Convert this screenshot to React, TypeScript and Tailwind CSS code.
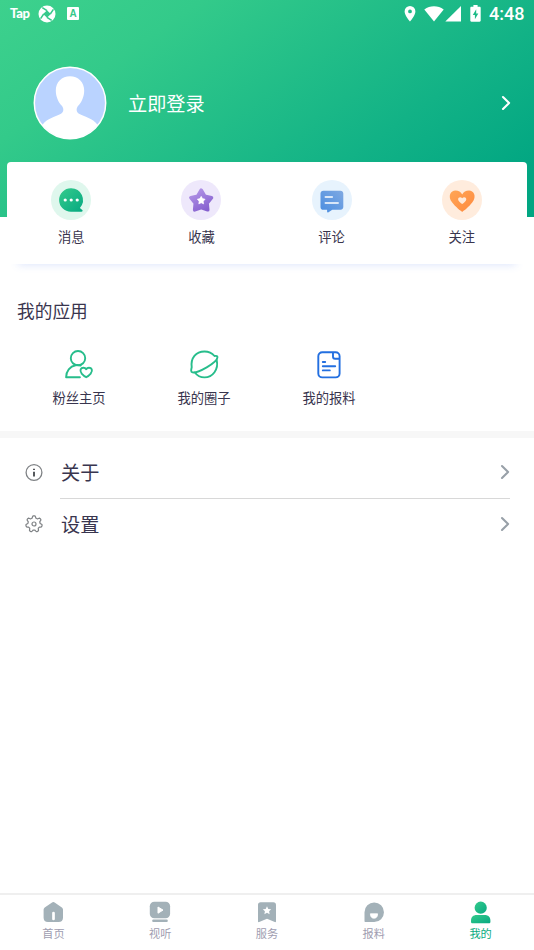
import type { ReactNode } from "react";

/* Shared gradients, referenced by id from the icons below */
function Gradients() {
  return (
    <svg width="0" height="0" className="absolute" aria-hidden="true">
      <defs>
        <linearGradient id="green" x1="0" y1="0" x2="1" y2="1">
          <stop offset="0" stopColor="#35cb8c" />
          <stop offset="1" stopColor="#06a981" />
        </linearGradient>
        <linearGradient id="purple" x1="0.2" y1="0" x2="0.8" y2="1">
          <stop offset="0" stopColor="#b193e6" />
          <stop offset="1" stopColor="#8660cf" />
        </linearGradient>
        <linearGradient id="blue" x1="1" y1="0" x2="0" y2="1">
          <stop offset="0" stopColor="#7fa9e2" />
          <stop offset="1" stopColor="#4a8de0" />
        </linearGradient>
        <linearGradient id="orange" x1="0" y1="0" x2="1" y2="1">
          <stop offset="0" stopColor="#ffa656" />
          <stop offset="1" stopColor="#ff8a3f" />
        </linearGradient>
      </defs>
    </svg>
  );
}

function StatusBar() {
  return (
    <div className="flex h-[27px] items-center pr-[9px] pl-[10px] text-white">
      <span className="w-[22px] pb-px font-['Lato'] text-[13px] leading-none font-black tracking-[-0.3px]">
        Tap
      </span>
      <svg width="18" height="18" viewBox="0 0 18 18" className="ml-[6px]">
        <circle cx="9" cy="9" r="8.5" fill="#fff" />
        <path d="M9 5.200 12.800 9 9 12.800 5.200 9Z" fill="#36c98b" />
        <path d="M9 5.700 4.300 2.600M12.300 9l3.100-4.700M9 12.300l4.700 3.100M5.700 9l-3.100 4.700" fill="none" stroke="#36c98b" strokeWidth="1.500" />
      </svg>
      <span className="ml-[11px] flex h-[13px] w-[12px] items-center justify-center rounded-[1px] bg-white font-['Liberation_Sans'] text-[10px] leading-none font-bold text-[#36c98b]">
        A
      </span>

      <div className="ml-auto flex items-center">
        <svg width="12" height="16" viewBox="0 0 12 16">
          <path d="M6 0A5.400 5.400 0 0 0 .6 5.400C.6 9.300 6 15.500 6 15.500S11.400 9.300 11.400 5.400A5.400 5.400 0 0 0 6 0Zm0 7.300a1.900 1.900 0 1 1 0-3.800 1.900 1.900 0 0 1 0 3.800Z" fill="#fff" />
        </svg>
        <svg width="20" height="16" viewBox="0 0 20 16" className="ml-[8px]">
          <path d="M.3 3.400C6-.9 14-.9 19.700 3.400L10 15.500Z" fill="#fff" />
        </svg>
        <svg width="16" height="16" viewBox="0 0 16 16" className="ml-[1px]">
          <path d="M16 0V15.500H.3Z" fill="#fff" />
        </svg>
        <svg width="11" height="17" viewBox="0 0 11 17" className="ml-[9px]">
          <path d="M3.400 0h4.200v1.800h2c.7 0 1.100.4 1.100 1.100v12.700c0 .7-.4 1.100-1.100 1.100H1.400c-.7 0-1.100-.4-1.100-1.100V2.900c0-.7.400-1.100 1.100-1.100h2Z" fill="#fff" />
          <path d="M6.200 4.200 2.800 10h2.100v4.200L8.300 8.500H6.200Z" fill="#1dbb87" />
        </svg>
        <span className="ml-[8px] w-[36px] font-['Roboto'] text-[18px] leading-none font-medium whitespace-nowrap">
          4:48
        </span>
      </div>
    </div>
  );
}

function Avatar() {
  return (
    <svg width="74" height="74" viewBox="0 0 74 74">
      <circle cx="37" cy="37" r="35.6" fill="#bad3ff" />
      <path d="M37 10.200c-8.200 0-14.200 5.800-14.200 14.200 0 6.200 2.600 11.600 5.800 15.200 2.400 2.900 2.400 6.200-.6 8.200-5 2.700-14.200 4.600-18.700 11.200C17.200 67.600 26.600 72.800 37 72.800S56.800 67.600 64.700 59c-4.500-6.600-13.700-8.500-18.700-11.200-3-2-3-5.300-.6-8.200 3.200-3.600 5.800-9 5.800-15.200C51.200 16 45.200 10.200 37 10.200Z" fill="#fff" />
      <circle cx="37" cy="37" r="35.700" fill="none" stroke="#fff" strokeWidth="1.500" />
    </svg>
  );
}

function Chevron({ color }: { color: string }) {
  return (
    <svg width="10" height="16" viewBox="0 0 10 16" fill="none" stroke={color} strokeWidth="2.100" strokeLinecap="round" strokeLinejoin="round">
      <path d="M2 2 8.100 8 2 14" />
    </svg>
  );
}

// Seven-toothed outline for the settings icon, sampled around the centre
const gearPath =
  Array.from({ length: 84 }, (_, i) => {
    const a = (i / 84) * Math.PI * 2;
    const r = 7.1 + 1.1 * Math.tanh(2.2 * Math.cos(7 * a));
    const x = 9 + r * Math.sin(a);
    const y = 9 - r * Math.cos(a);
    return `${i === 0 ? "M" : "L"}${x.toFixed(2)} ${y.toFixed(2)}`;
  }).join("") + "Z";

const shortcuts: { label: string; icon: ReactNode }[] = [
  {
    label: "消息",
    icon: (
      <>
        <circle cx="20" cy="20" r="20" fill="#dff7ed" />
        <path d="M19.900 8.200a11.800 11.800 0 0 0 0 23.600h10.400c1.500 0 1.700-1.500.7-2.100l-2.100-1.800A11.800 11.800 0 0 0 19.900 8.200Z" fill="url(#green)" />
        <g fill="#fff">
          <circle cx="14.200" cy="20" r="1.600" />
          <circle cx="20.200" cy="20" r="1.600" />
          <circle cx="26.200" cy="20" r="1.600" />
        </g>
      </>
    ),
  },
  {
    label: "收藏",
    icon: (
      <>
        <circle cx="20" cy="20" r="20" fill="#eee8fb" />
        <path d="m20.200 10.200 3.500 6 6.800 1.500-4.400 5.400.6 6.700-6.500-2.200-6.500 2.200.6-6.700-4.400-5.400 6.800-1.500Z" fill="url(#purple)" stroke="url(#purple)" strokeWidth="3.600" strokeLinejoin="round" />
        <path d="m20.200 16.300 1.300 2.300 2.600.6-1.800 2 .3 2.700-2.400-1.100-2.400 1.100.3-2.700-1.800-2 2.600-.6Z" fill="#fff" stroke="#fff" strokeWidth=".6" strokeLinejoin="round" />
      </>
    ),
  },
  {
    label: "评论",
    icon: (
      <>
        <circle cx="20" cy="20" r="20" fill="#e7f3fd" />
        <path d="M11.300 10.800h17.200c1.600 0 2.800 1.200 2.800 2.800v13.300c0 1.600-1.200 2.800-2.800 2.800h-8.200l-3.800 2.600c-.7.500-1.400.2-1.400-.6v-2h-3.800a2.800 2.800 0 0 1-2.800-2.800V13.600c0-1.600 1.200-2.800 2.800-2.800Z" fill="url(#blue)" />
        <path d="M13.300 17.100h7M13.300 22.900h12.900" stroke="#fff" strokeWidth="1.500" strokeLinecap="round" />
      </>
    ),
  },
  {
    label: "关注",
    icon: (
      <>
        <circle cx="20" cy="20" r="20" fill="#ffecdd" />
        <path d="M20.200 31.900c-1.600-.8-6.700-5-10-9.300C5.100 15.900 9 10.500 13.400 10.500c3.200 0 5.500 1.500 6.800 4 1.300-2.500 3.600-4 6.800-4 4.400 0 8.300 5.400 3.200 12.100-3.300 4.300-8.400 8.500-10 9.300Z" fill="url(#orange)" />
        <path d="M20.200 23.900c-1.300-.8-4.100-2.600-4.100-4.700 0-2.300 2.900-2.700 4.100-.9 1.200-1.800 4.100-1.400 4.100.9 0 2.100-2.800 3.900-4.100 4.700Z" fill="#fff" fillOpacity=".8" />
      </>
    ),
  },
];

const apps: { label: string; icon: ReactNode }[] = [
  {
    label: "粉丝主页",
    icon: (
      <g stroke="#27bd8b">
        <circle cx="15" cy="9.200" r="7.200" />
        <path d="M12.600 16.200C7 17.300 3.100 22 3.100 28.300H16.900M12.600 16.200c1.900-.4 3.600-.2 5 .3" />
        <path d="M23.200 28.200c-1.100-.5-3.100-2-4.500-3.600-2.600-3.300-.8-5.900 1.700-5.900 1.400 0 2.300.6 2.800 1.500.5-.9 1.400-1.500 2.800-1.500 2.500 0 4.300 2.600 1.700 5.900-1.400 1.600-3.400 3.100-4.500 3.600Z" />
      </g>
    ),
  },
  {
    label: "我的圈子",
    icon: (
      <g stroke="#27bd8b">
        <path d="M3.700 18.200C2.500 9 7.900 2.500 16.500 2.500c4.300 0 7.600 1.700 10 4.500 2.200-.4 3.200.2 2.900 1.700-.4 5-19.800 15.800-24.900 14.700-1.800-.4-1.500-2.400-.8-5.200Z" />
        <path d="M28.700 11.300C30.800 20.300 24.800 28.400 16.500 28.400c-3.800 0-7.300-1.700-9.600-4.900" />
      </g>
    ),
  },
  {
    label: "我的报料",
    icon: (
      <g stroke="#236fe0">
        <path d="M20 3.200H9.300a4 4 0 0 0-4 4v17.200a4 4 0 0 0 4 4h13.300a4 4 0 0 0 4-4V9.800M20 3.200v4.500c0 1.300.8 2.100 2.100 2.100h4.500M20 3.200h2.600a4 4 0 0 1 4 4v2.600" />
        <path d="M9.800 13h2.400M9.800 17.200h12.400M9.800 21.400h7" />
      </g>
    ),
  },
];

const rows: { label: string; icon: ReactNode }[] = [
  {
    label: "关于",
    icon: (
      <>
        <circle cx="9" cy="8.500" r="7.900" strokeWidth="1.300" />
        <path d="M9 7.700v4.700M9 4.800v1.200" strokeWidth="2" stroke="#55585c" />
      </>
    ),
  },
  {
    label: "设置",
    icon: (
      <g strokeWidth="1.200">
        <path d={gearPath} />
        <circle cx="9" cy="9" r="2" />
      </g>
    ),
  },
];

const tabs: { label: string; active?: boolean; icon: ReactNode }[] = [
  {
    label: "首页",
    icon: (
      <>
        <path d="M9.700 1.700c1.100-.8 2.200-.8 3.300 0l6.500 4.600c1 .7 1.500 1.500 1.500 2.700v7.700c0 2.800-1.600 4.400-4.400 4.400H6c-2.800 0-4.400-1.600-4.400-4.400V9c0-1.200.5-2 1.500-2.700Z" />
        <path d="M11.500 12v5.900" stroke="#fff" strokeWidth="2.700" strokeLinecap="round" />
      </>
    ),
  },
  {
    label: "视听",
    icon: (
      <>
        <rect x=".8" y=".7" width="20.300" height="16.600" rx="4.500" />
        <path d="M9 6v6.200l5-3.100Z" fill="#fff" stroke="#fff" strokeWidth="1" strokeLinejoin="round" />
        <rect x="3.200" y="18.600" width="15.600" height="2.400" rx="1.100" />
      </>
    ),
  },
  {
    label: "服务",
    icon: (
      <>
        <path d="M4.600 1.300h12.800c1.600 0 2.600 1 2.600 2.600v16.500c0 .7-.6 1-1.200.7L11 17.800l-7.800 3.300c-.6.3-1.200 0-1.200-.7V3.900c0-1.600 1-2.600 2.600-2.600Z" />
        <path d="m11 5.300 1.300 2.600 2.900.4-2.100 2 .5 2.900-2.600-1.400-2.600 1.400.5-2.900-2.100-2 2.900-.4Z" fill="#fff" />
      </>
    ),
  },
  {
    label: "报料",
    icon: (
      <>
        <path d="M11.200 1.500a9.700 9.700 0 1 1 0 19.500H2.600c-.8 0-1.100-.4-1.100-1.100v-8.700A9.700 9.700 0 0 1 11.200 1.500Z" />
        <path d="M7.400 12.800h7.200a3.600 4.400 0 0 1-7.200 0Z" fill="#fff" stroke="#fff" strokeWidth=".8" strokeLinejoin="round" />
      </>
    ),
  },
  {
    label: "我的",
    active: true,
    icon: (
      <>
        <circle cx="10.700" cy="6.700" r="6.100" />
        <path d="M6.700 14h8c3.600 0 5.700 2.100 5.700 5.700v1c0 1-.6 1.600-1.600 1.600H2.600c-1 0-1.600-.6-1.600-1.600v-1C1 16.100 3.100 14 6.700 14Z" />
      </>
    ),
  },
];

export default function App() {
  return (
    <div className="flex h-[950px] w-[534px] flex-col overflow-hidden bg-white font-['Noto_Sans_CJK_SC',sans-serif] text-[#39354e]">
      <Gradients />

      {/* Header */}
      <header className="h-[217px] shrink-0 bg-[linear-gradient(145deg,#3dd18d_0%,#33ca8a_24%,#12b286_68%,#01a682_92%)]">
        <StatusBar />
        <div className="mt-[39px] flex items-center pr-[23px] pl-[33px]">
          <Avatar />
          <span className="ml-[21px] pb-px text-[19.200px] leading-[28px] text-white">立即登录</span>
          <span className="ml-auto">
            <Chevron color="#fff" />
          </span>
        </div>
      </header>

      {/* Shortcut card */}
      <section className="relative z-10 mr-[7px] ml-[6.500px] -mt-[55px] grid h-[102px] shrink-0 grid-cols-4 rounded-[4px] bg-white pt-[18px] shadow-[0_12px_8px_-11px_rgba(90,130,240,0.2)]">
        {shortcuts.map(({ label, icon }) => (
          <div key={label} className="flex flex-col items-center pr-[0.500px]">
            <svg width="40" height="40" viewBox="0 0 40 40">{icon}</svg>
            <span className="mt-[7px] text-[13.300px] leading-[20px]">{label}</span>
          </div>
        ))}
      </section>

      {/* Apps */}
      <section className="h-[167px] shrink-0 pt-[32px] pr-[18px] pl-[16px]">
        <h2 className="pl-px text-[17.700px] leading-[28px]">我的应用</h2>
        <div className="mt-[25px] grid grid-cols-4">
          {apps.map(({ label, icon }) => (
            <div key={label} className="flex flex-col items-center">
              <svg width="32" height="32" viewBox="0 0 32 32" fill="none" strokeWidth="1.900" strokeLinecap="round" strokeLinejoin="round">
                {icon}
              </svg>
              <span className="mt-[7px] pl-px text-[13.300px] leading-[20px]">{label}</span>
            </div>
          ))}
        </div>
      </section>
      <div className="h-[7px] shrink-0 bg-[#f7f7f7]" />

      {/* Menu */}
      <section className="pt-[8px] pr-[24px] pl-[25px]">
        {rows.map(({ label, icon }, i) => (
          <div key={label} className={`flex items-center ${i === 0 ? "h-[53px]" : "h-[50px]"}`}>
            <svg width="18" height="18" viewBox="0 0 18 18" fill="none" stroke="#7f8285" strokeLinejoin="round" className="overflow-visible">
              {icon}
            </svg>
            <div className={`ml-[17px] flex h-full flex-1 items-center justify-between pl-px ${i === 0 ? "border-b border-[#d8d8d8]" : ""}`}>
              <span className="pb-px text-[19.200px] leading-[28px]">{label}</span>
              <Chevron color="#98a0a8" />
            </div>
          </div>
        ))}
      </section>

      {/* Tab bar */}
      <nav className="mt-auto grid h-[57px] shrink-0 grid-cols-5 border-t-2 border-[#efefef] pt-[6px]">
        {tabs.map(({ label, icon, active }) => (
          <div key={label} className="flex flex-col items-center">
            <svg width="22" height="23" viewBox="0 0 22 23" fill={active ? "url(#green)" : "#a3b1b8"}>
              {icon}
            </svg>
            <span className={`mt-px text-[11.200px] leading-[16px] ${active ? "text-[#0cab82]" : "text-[#a09db0]"}`}>
              {label}
            </span>
          </div>
        ))}
      </nav>
    </div>
  );
}
